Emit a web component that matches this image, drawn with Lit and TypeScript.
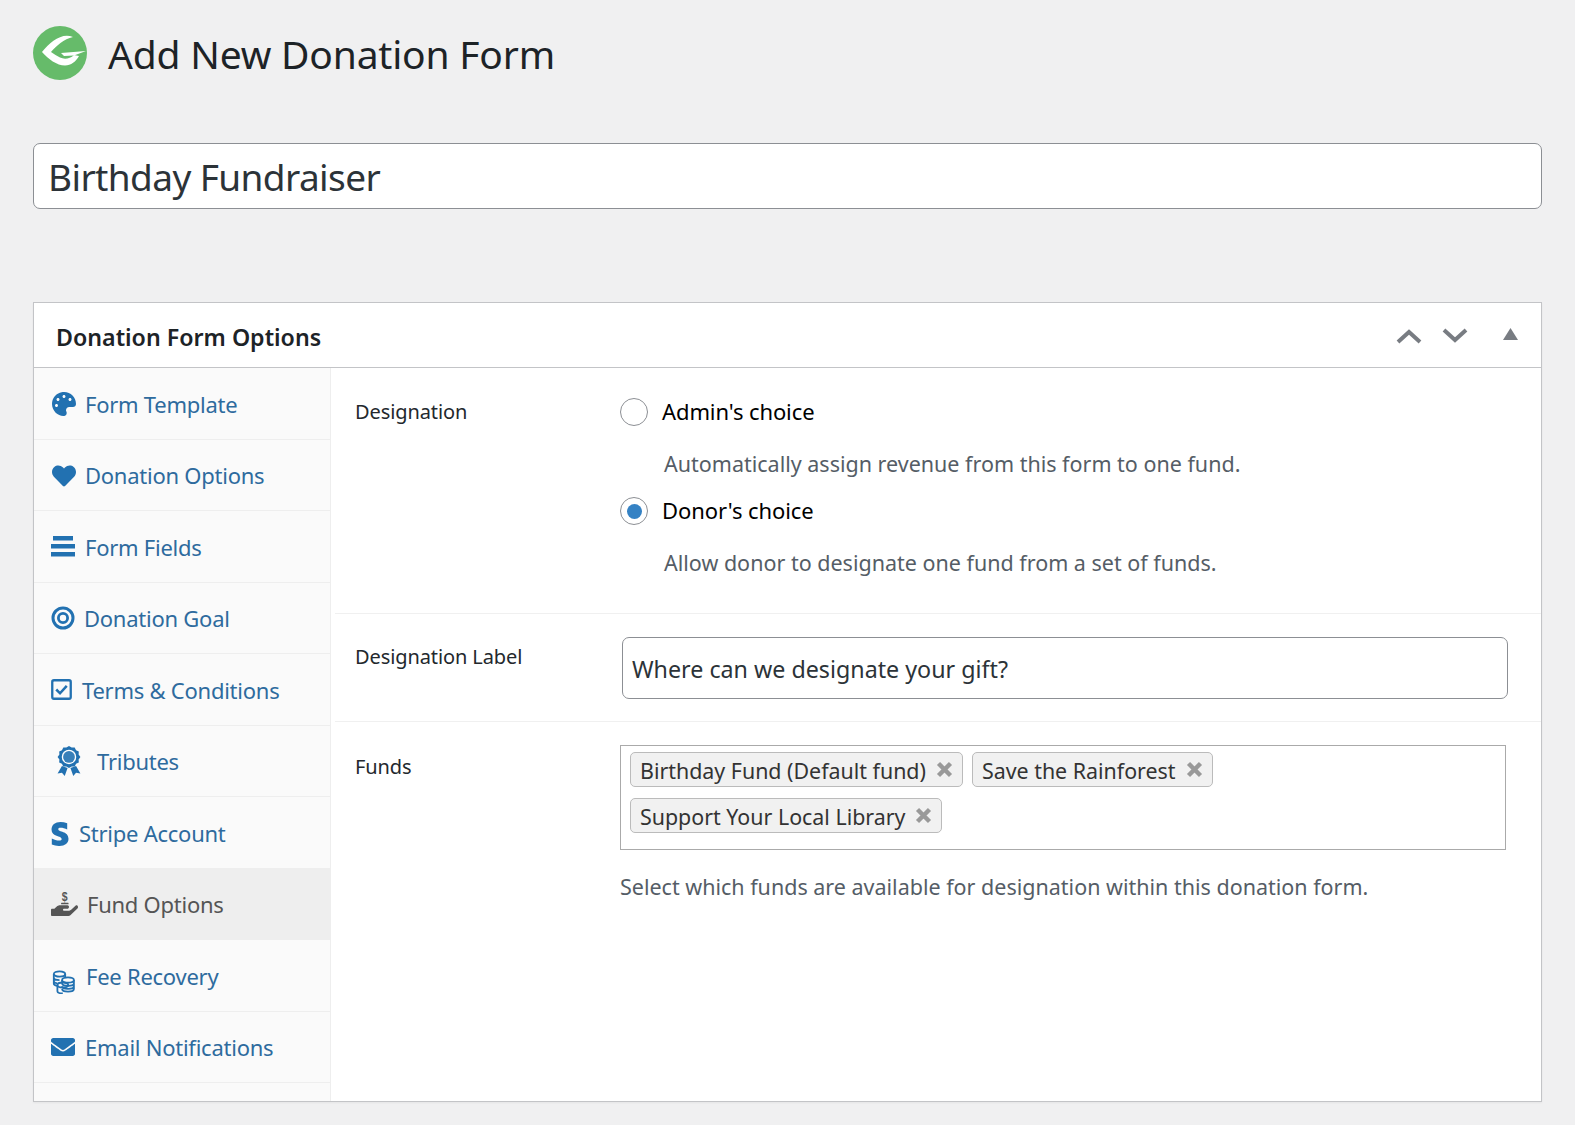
import { LitElement, html, css, svg } from "lit";
import { customElement } from "lit/decorators.js";

const ic = (vb: string, w: number, h: number, inner: unknown, par = "xMidYMid meet") =>
  html`<svg class="ic" viewBox=${vb} preserveAspectRatio=${par} style="width:${w}px;height:${h}px" fill="currentColor">${inner}</svg>`;

const palette = svg`<path d="M204.3 5C104.9 24.4 24.8 104.3 5.2 203.4c-37 187 131.7 326.4 258.8 306.7 41.2-6.4 61.4-54.6 42.5-91.7-23.1-45.4 9.9-98.4 60.9-98.4h79.7c35.8 0 64.8-29.6 64.9-65.3C511.5 97.1 368.1-26.9 204.3 5zM96 320c-17.7 0-32-14.3-32-32s14.3-32 32-32 32 14.3 32 32-14.3 32-32 32zm32-128c-17.7 0-32-14.3-32-32s14.3-32 32-32 32 14.3 32 32-14.3 32-32 32zm128-64c-17.7 0-32-14.3-32-32s14.3-32 32-32 32 14.3 32 32-14.3 32-32 32zm128 64c-17.7 0-32-14.3-32-32s14.3-32 32-32 32 14.3 32 32-14.3 32-32 32z"/>`;
const heart = svg`<path d="M462.3 62.6C407.5 15.9 326 24.3 275.7 76.2L256 96.5l-19.7-20.3C186.1 24.3 104.5 15.9 49.7 62.6c-62.8 53.6-66.1 149.8-9.9 207.9l193.5 199.8c12.5 12.9 32.8 12.9 45.3 0l193.5-199.8c56.3-58.1 53-154.3-9.8-207.9z"/>`;
const bars = svg`<rect x="2" y="0" width="20" height="4.5"/><rect x="0" y="8" width="24" height="4.5"/><rect x="0" y="16" width="24" height="4.5"/>`;
const goal = svg`<circle cx="12" cy="12" r="10" fill="none" stroke="currentColor" stroke-width="3"/><circle cx="12" cy="12" r="4.6" fill="none" stroke="currentColor" stroke-width="2.8"/>`;
const check = svg`<rect x="1.2" y="1.2" width="17.6" height="17.6" rx="1.6" fill="none" stroke="currentColor" stroke-width="2.2"/><path d="M5 10l3.6 3.6L15 6.6" fill="none" stroke="currentColor" stroke-width="2.4"/>`;
const award = svg`<path d="M12 0l2.8 1.7 3.2-.2 1.4 2.9 2.9 1.4-.2 3.2L24 11.5l-1.9 2.6.2 3.2-2.9 1.4-1.4 2.9-3.2-.2L12 23l-2.8-1.6-3.2.2-1.4-2.9-2.9-1.4.2-3.2L0 11.5l1.9-2.5-.2-3.2 2.9-1.4L6 1.5l3.2.2z"/><circle cx="12" cy="11.5" r="7.6" fill="#fff"/><circle cx="12" cy="11.5" r="6.2" opacity=".9"/><path d="M4.6 21L0 29l4.6-1L7.5 31.5l3-8.3zM19.4 21L24 29l-4.6-1L16.5 31.5l-3-8.3z"/>`;
const stripe = svg`<path d="M155.3 154.6c0-22.3 18.6-30.9 48.4-30.9 43.4 0 98.5 13.3 141.9 36.7V26.1C298.3 7.2 251.1 0 203.8 0 88.1 0 11 60.4 11 161.4c0 157.9 216.8 132.3 216.8 200.4 0 26.4-22.9 34.9-54.7 34.9-47.2 0-108.2-19.5-156.1-45.5v128.5a396.09 396.09 0 0 0 156 32.4c118.6 0 200.3-51 200.3-153.6 0-170.2-218-139.7-218-203.9z"/>`;
const hand = svg`<path transform="translate(0 -64)" d="M565.3 328.1c-11.8-10.7-30.2-10-42.6 0L430.3 402c-11.3 9.1-25.4 14-40 14H272c-8.8 0-16-7.2-16-16s7.2-16 16-16h78.3c15.9 0 30.7-10.9 33.3-26.6 3.3-20-12.1-37.4-31.6-37.4H192c-27 0-53.1 9.3-74.1 26.3L71.4 384H16c-8.8 0-16 7.2-16 16v96c0 8.8 7.2 16 16 16h356.8c14.5 0 28.6-4.9 40-14l151.2-121c15.2-12.2 16.4-35 1.3-48.9z"/><text x="292" y="186" text-anchor="middle" font-family="Liberation Sans" font-weight="700" font-size="225">$</text><rect x="215" y="212" width="160" height="26" rx="10"/>`;
const coins = svg`<g fill="none" stroke="currentColor" stroke-width="1.8"><ellipse cx="7.5" cy="4" rx="5.7" ry="2.6"/><path d="M1.8 4v9.5c0 1 1.5 2 3.2 2.3M1.8 7.5c0 1.4 2.5 2.6 5.7 2.6M1.8 11c0 1.2 1.6 2.1 3.4 2.4M13.2 4v3"/><ellipse cx="16" cy="10" rx="5.9" ry="2.7"/><path d="M21.9 10v9c0 1.4-2.6 2.6-5.9 2.6s-5.9-1.2-5.9-2.6M21.9 13.2c0 1.4-2.6 2.6-5.9 2.6s-5.9-1.2-5.9-2.6M21.9 16.2c0 1.4-2.6 2.6-5.9 2.6s-5.9-1.2-5.9-2.6M10.1 10v3.5"/><ellipse cx="10.8" cy="15" rx="5.4" ry="2.5"/><path d="M5.4 15v6c0 1.3 2.4 2.4 5.4 2.4"/></g>`;
const mail = svg`<path d="M502.3 190.8c3.9-3.1 9.7-.2 9.7 4.7V400c0 26.5-21.5 48-48 48H48c-26.5 0-48-21.5-48-48V195.6c0-5 5.7-7.8 9.7-4.7 22.4 17.4 52.1 39.5 154.1 113.6 21.1 15.4 56.7 47.8 92.2 47.6 35.7.3 72-32.8 92.3-47.6 102-74.1 131.6-96.3 154-113.7zM256 320c23.2.4 56.6-29.2 73.4-41.4 132.7-96.3 142.8-104.7 173.4-128.7 5.8-4.5 9.2-11.5 9.2-18.9v-19c0-26.5-21.5-48-48-48H48C21.5 64 0 85.5 0 112v19c0 7.4 3.4 14.3 9.2 18.9 30.6 23.9 40.7 32.4 173.4 128.7 16.8 12.2 50.2 41.8 73.4 41.4z"/>`;

const tabs = [
  { t: "Form Template", i: ic("0 0 512 512", 24, 24, palette), g: 9, l: 1, dy: 2 },
  { t: "Donation Options", i: ic("0 0 512 512", 24, 24, heart), g: 9, l: 1, dy: 2 },
  { t: "Form Fields", i: ic("0 0 24 21", 24, 21, bars), g: 10, l: 0, dy: 0 },
  { t: "Donation Goal", i: ic("0 0 24 24", 24, 24, goal), g: 9, l: 0, dy: 1 },
  { t: "Terms & Conditions", i: ic("0 0 20 20", 21, 21, check), g: 10, l: 0, dy: 0 },
  { t: "Tributes", i: ic("0 0 24 31.5", 24, 30, award), g: 16, l: 6, dy: 0 },
  { t: "Stripe Account", i: ic("0 0 384 512", 18, 24, stripe), g: 10, l: 0, dy: 4 },
  { t: "Fund Options", i: ic("0 0 576 448", 27, 25, hand, "none"), g: 9, l: 0, dy: 0, active: true },
  { t: "Fee Recovery", i: ic("0 0 24 24", 24, 24, coins), g: 10, l: 1, dy: 13 },
  { t: "Email Notifications", i: ic("0 0 512 512", 24, 24, mail), g: 10, l: 0, dy: 0 },
];

@customElement("app-root")
export class AppRoot extends LitElement {
  static styles = css`
    :host { display: block; background: #f0f0f1; font-family: "Noto Sans", "Open Sans", sans-serif; color: #3c434a; box-sizing: border-box; padding: 0 33px; overflow: hidden; height: 1125px; }
    * { box-sizing: border-box; }
    .head { display: flex; align-items: center; gap: 21px; padding-top: 24px; height: 82px; }
    .head svg { width: 54px; height: 54px; flex: none; }
    h1 { margin: 2px 0 0; font-weight: 400; font-size: 39px; letter-spacing: -0.2px; color: #1d2327; line-height: 58px; }
    .title { margin-top: 61px; height: 66px; background: #fff; border: 1px solid #8c8f94; border-radius: 7px; padding: 1px 14px 0; font-size: 37px; letter-spacing: -0.6px; line-height: 64px; color: #2c3338; }
    .box { margin-top: 93px; height: 800px; background: #fff; border: 1px solid #c3c4c7; box-shadow: 0 1px 2px rgba(0,0,0,.05); display: flex; flex-direction: column; }
    .bh { height: 65px; flex: none; border-bottom: 1px solid #c3c4c7; display: flex; align-items: center; padding: 0 0 0 22px; }
    .bh h2 { margin: 0; padding-top: 4px; font-size: 23.2px; font-weight: 600; color: #1d2327; flex: 1; }
    .ctl { display: flex; align-items: center; color: #787c82; padding-right: 23px; padding-top: 1px; }
    .ctl svg { display: block; }
    .ctl .dn { margin-left: 20px; }
    .ctl .tri { margin-left: 35px; margin-top: -3px; }
    .body { flex: 1; display: flex; min-height: 0; }
    .side { width: 297px; flex: none; background: #fafafa; border-right: 1px solid #eee; overflow: hidden; }
    .tab { height: 71.5px; display: flex; align-items: center; border-bottom: 1px solid #eee; font-size: 22px; letter-spacing: -0.25px; color: #2271b1; }
    .tab.active { background: #eee; border-bottom-color: #eee; color: #555; }
    .tab span { color: #2e6b9e; padding-top: 1px; }
    .tab.active span { color: #555; }
    .ic { flex: none; display: block; }
    .main { flex: 1; min-width: 0; padding-left: 4px; }
    .row { display: grid; grid-template-columns: 285px 1fr; border-bottom: 1px solid #f0f0f0; }
    .row:last-child { border-bottom: 0; }
    .lab { font-size: 20px; letter-spacing: -0.1px; color: #23282d; padding-left: 20px; }
    .r1 { height: 246px; padding-top: 30px; }
    .r2 { height: 108px; padding-top: 23px; }
    .r2 .lab { padding-top: 6px; }
    .r3 { padding-top: 23px; }
    .r3 .lab { padding-top: 8px; }
    .radio { display: flex; align-items: center; gap: 14px; height: 28px; font-size: 22px; letter-spacing: -0.1px; color: #000; }
    .radio span { padding-bottom: 2px; }
    .dot { width: 28px; height: 28px; border-radius: 50%; border: 1px solid #8c8f94; background: #fff; display: flex; align-items: center; justify-content: center; flex: none; }
    .dot i { width: 15px; height: 15px; border-radius: 50%; background: #3582c4; display: block; }
    .desc { font-size: 21.5px; color: #555d66; padding-left: 44px; margin: 22px 0 17px; line-height: 32px; height: 32px; }
    .inp { height: 62px; width: 886px; margin-left: 2px; border: 1px solid #8c8f94; border-radius: 7px; font-size: 23.25px; color: #2c3338; padding: 2px 9px 0; display: flex; align-items: center; }
    .sel { width: 886px; height: 105px; border: 1px solid #aaa; padding: 6px 9px; display: flex; flex-wrap: wrap; gap: 11px 9px; align-content: flex-start; }
    .chip { height: 35px; display: flex; align-items: center; gap: 10px; background: #f1f1f1; border: 1px solid #bbb; border-radius: 5px; padding: 0 9px; font-size: 21.4px; color: #333; }
    .chip span { padding-top: 2px; }
    .chip svg { width: 17px; height: 17px; display: block; color: #999; flex: none; }
    .help { margin-top: 21px; font-size: 21.5px; color: #555d66; line-height: 32px; }
  `;

  chip(t: string) {
    return html`<div class="chip"><span>${t}</span><svg viewBox="0 0 17 17"><path d="M2.5 2.5l12 12M14.5 2.5l-12 12" stroke="currentColor" stroke-width="4.4" fill="none"/></svg></div>`;
  }

  render() {
    return html`
      <div class="head">
        <svg viewBox="0 0 54 54">
          <circle cx="27" cy="27" r="27" fill="#66bb6a"/>
          <path d="M40 11 C29 6 17 16 9 26 C15 33 24 39.5 32 39.5 C38 39.5 43 35.5 46 30 L41 29 C37 33 31 33.5 27 31.5 C24 30 21 28 18 26 C23 20 31 13 40 11Z" fill="#fff"/>
          <path d="M28 27 L53 25 L41 29.5 L31 30 Z" fill="#fff"/>
        </svg>
        <h1>Add New Donation Form</h1>
      </div>
      <div class="title">Birthday Fundraiser</div>
      <div class="box">
        <div class="bh">
          <h2>Donation Form Options</h2>
          <div class="ctl">
            <svg width="26" height="16" viewBox="0 0 26 16"><path d="M2 14L13 4l11 10" fill="none" stroke="currentColor" stroke-width="4"/></svg>
            <svg class="dn" width="26" height="16" viewBox="0 0 26 16"><path d="M2 2l11 10L24 2" fill="none" stroke="currentColor" stroke-width="4"/></svg>
            <svg class="tri" width="15" height="12" viewBox="0 0 15 12"><path d="M7.5 0L15 12H0z" fill="currentColor"/></svg>
          </div>
        </div>
        <div class="body">
          <div class="side">
            ${tabs.map(
              (t) => html`<div class="tab ${t.active ? "active" : ""}" style="gap:${t.g}px;padding-left:${17 + t.l}px"><div style="padding-top:${t.dy}px">${t.i}</div><span>${t.t}</span></div>`
            )}
          </div>
          <div class="main">
            <div class="row r1">
              <div class="lab">Designation</div>
              <div>
                <div class="radio"><div class="dot"></div><span>Admin's choice</span></div>
                <div class="desc">Automatically assign revenue from this form to one fund.</div>
                <div class="radio"><div class="dot"><i></i></div><span>Donor's choice</span></div>
                <div class="desc">Allow donor to designate one fund from a set of funds.</div>
              </div>
            </div>
            <div class="row r2">
              <div class="lab">Designation Label</div>
              <div class="inp">Where can we designate your gift?</div>
            </div>
            <div class="row r3">
              <div class="lab">Funds</div>
              <div>
                <div class="sel">
                  ${this.chip("Birthday Fund (Default fund)")}
                  ${this.chip("Save the Rainforest")}
                  ${this.chip("Support Your Local Library")}
                </div>
                <div class="help">Select which funds are available for designation within this donation form.</div>
              </div>
            </div>
          </div>
        </div>
      </div>
    `;
  }
}
